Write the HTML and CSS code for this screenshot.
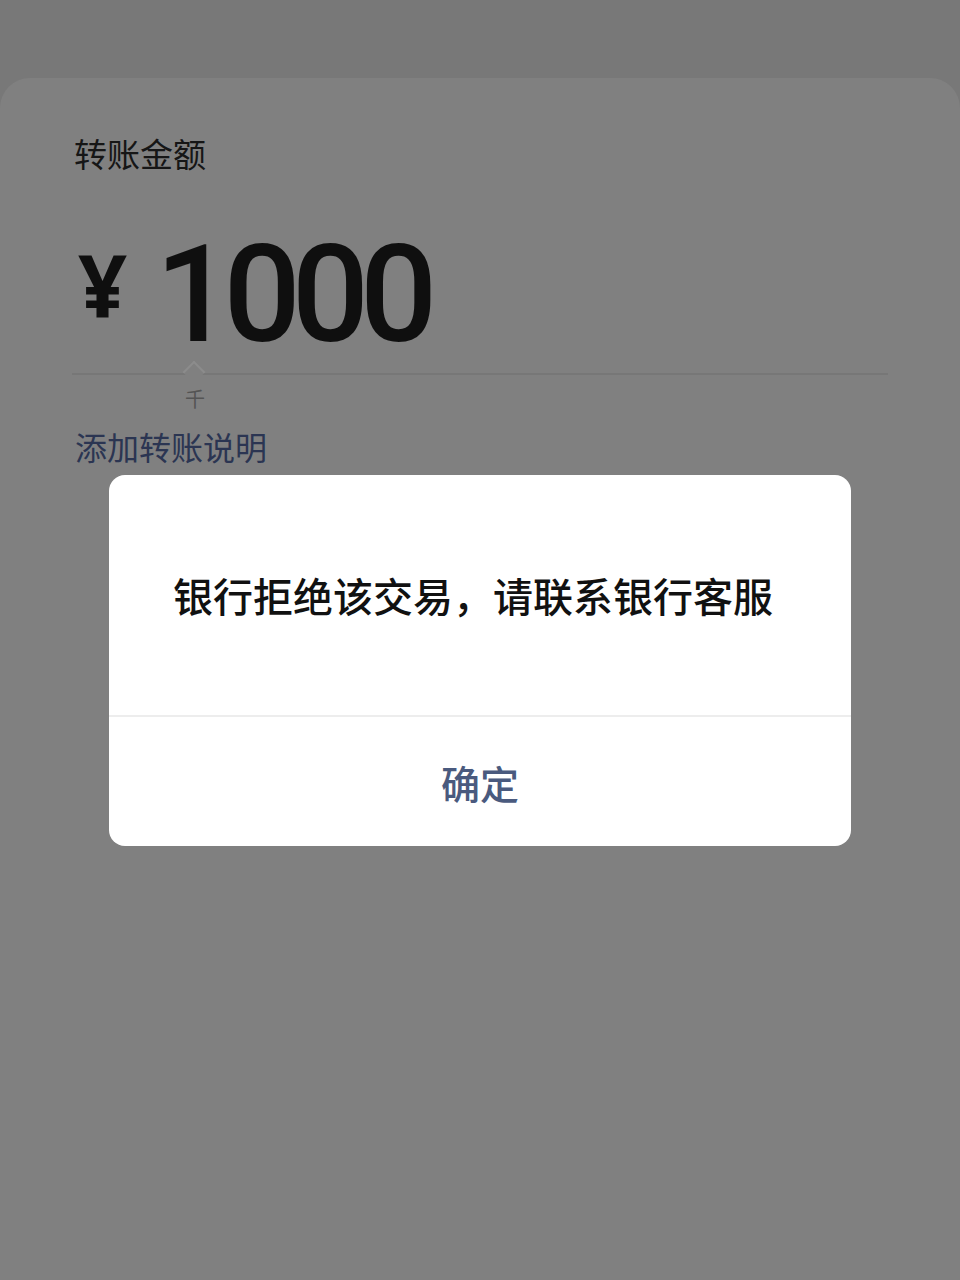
FILE: index.html
```html
<!DOCTYPE html>
<html lang="zh-CN">
<head>
<meta charset="utf-8">
<link rel="stylesheet" href="styles.css">
</head>
<body>
<div class="screen">
  <div class="top"></div>
  <div class="card">
    <div class="label">转账金额</div>
    <div class="amount">
      <span class="yen">¥</span>
      <span class="num">1000</span>
    </div>
    <div class="rule">
      <span class="notch"></span>
    </div>
    <div class="unit">千</div>
    <div class="note">添加转账说明</div>
  </div>
  <div class="dialog">
    <div class="msg">银行拒绝该交易，请联系银行客服</div>
    <div class="btn">确定</div>
  </div>
</div>
</body>
</html>
```
FILE: styles.css
```css
html, body {
  margin: 0;
  padding: 0;
}
body {
  background: #787878;
  font-family: "Noto Sans CJK SC", "Noto Sans", sans-serif;
}
.screen {
  position: relative;
  width: 960px;
  height: 1280px;
  overflow: hidden;
}
.top {
  height: 78px;
}
.card {
  background: #808080;
  border-radius: 30px 30px 0 0;
  height: 1202px;
  padding: 0 72px 0 72px;
  box-sizing: border-box;
}
.label {
  padding-top: 51px;
  padding-left: 2px;
  font-size: 33px;
  line-height: 48px;
  color: #161616;
}
.amount {
  display: flex;
  align-items: flex-start;
  margin-top: 58px;
  height: 120px;
  padding-left: 6px;
}
.yen {
  font-family: "Noto Sans", sans-serif;
  font-weight: 700;
  font-size: 86px;
  color: #0f0f0f;
  line-height: 86px;
  margin-top: 6px;
  margin-right: 28px;
}
.num {
  font-family: Roboto, sans-serif;
  font-weight: 500;
  font-size: 136px;
  letter-spacing: -9px;
  line-height: 120px;
  color: #0f0f0f;
}
.rule {
  position: relative;
  margin-top: 18px;
  height: 2px;
  background: #777777;
}
.notch {
  position: absolute;
  left: 114px;
  top: -9px;
  width: 14px;
  height: 14px;
  border-left: 2px solid #8c8c8c;
  border-top: 2px solid #8c8c8c;
  background: #808080;
  transform: rotate(45deg);
}
.unit {
  padding-left: 113px;
  margin-top: 10px;
  font-size: 20px;
  line-height: 28px;
  color: #545454;
}
.note {
  margin-top: 10px;
  padding-left: 3px;
  font-size: 32px;
  line-height: 46px;
  color: #2b3552;
}
.dialog {
  position: absolute;
  left: 109px;
  top: 475px;
  width: 742px;
  height: 371px;
  background: #ffffff;
  border-radius: 16px;
  display: flex;
  flex-direction: column;
  overflow: hidden;
}
.msg {
  height: 242px;
  border-bottom: 2px solid #ededed;
  display: flex;
  align-items: center;
  justify-content: center;
  font-size: 40px;
  font-weight: 500;
  color: #111111;
  padding-right: 14px;
  box-sizing: border-box;
}
.btn {
  flex: 1;
  display: flex;
  align-items: center;
  justify-content: center;
  font-size: 39px;
  font-weight: 500;
  color: #4a5a7e;
}
```
